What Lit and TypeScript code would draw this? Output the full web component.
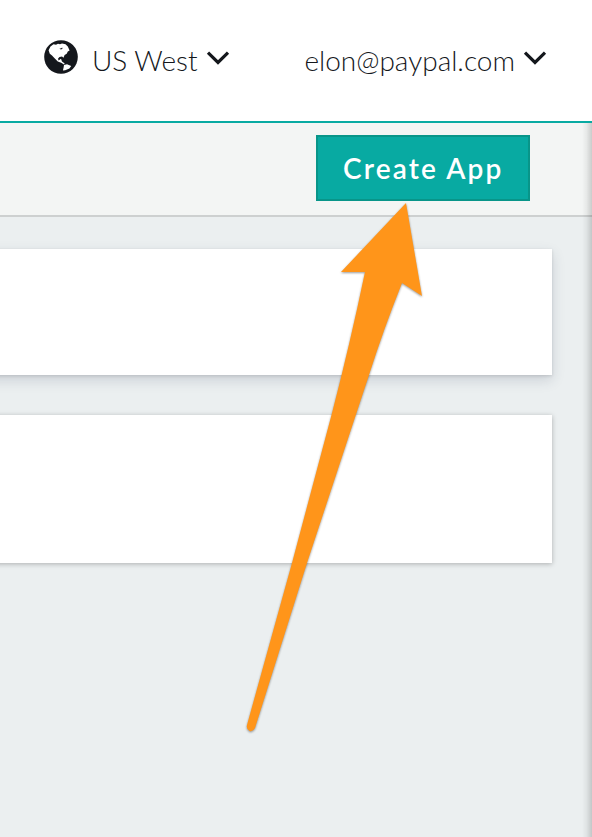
import { LitElement, html, css, svg } from "lit";
import { customElement } from "lit/decorators.js";

const chevron = svg`<path d="M2 2.6 L12 12.4 L22 2.6" fill="none" stroke="#14171c" stroke-width="3.2"/>`;

@customElement("app-root")
export class AppRoot extends LitElement {
  static styles = css`
    :host { display: block; position: relative; width: 592px; height: 837px; overflow: hidden; background: #ebeff0; font-family: Lato, sans-serif; color: #14171c; }
    * { box-sizing: border-box; }
    .header { height: 123px; background: #fff; border-bottom: 2px solid #08aaa2; display: flex; align-items: flex-start; padding: 40px 0 0 44px; }
    .item { display: flex; height: 40px; line-height: 40px; font-size: 28px; font-weight: 300; white-space: nowrap; }
    .region { width: 260.4px; }
    .globe { width: 34px; height: 34px; margin-right: 14px; flex: none; }
    .label { flex: none; }
    .region .label { width: 114px; }
    .account .label { width: 219px; }
    .chevron { width: 24px; height: 16px; margin-top: 10px; flex: none; }
    .toolbar { height: 94px; background: #f3f5f4; border-bottom: 2px solid #cdd0d0; display: flex; justify-content: flex-end; padding: 12px 62px 0 0; }
    .create { width: 214px; height: 66px; margin: 0; padding: 0; background: #08aaa2; border: 2px solid #089589; color: #fff; font: 600 28px/62px Lato, sans-serif; letter-spacing: 2.15px; text-indent: 0.5px; text-align: center; white-space: nowrap; }
    .content { padding-top: 32px; display: flex; flex-direction: column; gap: 40px; }
    .card { width: 572px; height: 126px; margin-left: -20px; background: #fff; box-shadow: 0 1px 3px rgba(0,0,0,.12), 0 5px 12px rgba(50,60,90,.17); }
    .card.tall { height: 148px; box-shadow: 0 1px 5px rgba(0,0,0,.27); }
    .edge { position: absolute; top: 123px; right: 0; bottom: 0; width: 10px; background: linear-gradient(to right, rgba(0,0,0,0), rgba(0,0,0,.05) 45%, rgba(0,0,0,.17)); }
    .arrow { position: absolute; inset: 0; width: 592px; height: 837px; filter: drop-shadow(0 1.5px 1.3px rgba(0,0,0,.4)); pointer-events: none; }
  `;

  render() {
    return html`
      <header class="header">
        <div class="item region">
          <svg class="globe" viewBox="0 0 34 34">
            <circle cx="17" cy="17" r="16.8" fill="#14171c"/>
            <path fill="#fff" d="M4.6 10.2 L6.5 6.4 L9.5 4.2 L12 4.8 L14 3.8 L16 4.2 L18 3.4 L21.5 4.2 L23.8 6.4 L25.6 10.4 L23.8 11.6 L22.7 13.7 L20.6 15 L19.5 17.7 L18 16.6 L15.5 17 L14.1 18.6 L14.5 20.4 L17 18.8 L18 21.4 L20.7 23.4 L20 24.6 L17.2 22.8 L13.8 21.4 L10.8 18.6 L8 15.4 L5.8 13.8 Z"/>
            <path fill="#14171c" d="M15.4 8.8 L17.2 8.3 L18.2 7.4 L18.5 8.8 L17 9.5 Z"/>
            <path fill="#fff" d="M20 24.9 L23 24.3 L27.2 26 L25.4 28.6 L21.2 30.3 L18.9 30.4 L19.6 27.6 Z"/>
          </svg>
          <span class="label">US West</span>
          <svg class="chevron" viewBox="0 0 24 16">${chevron}</svg>
        </div>
        <div class="item account">
          <span class="label">elon@paypal.com</span>
          <svg class="chevron" viewBox="0 0 24 16">${chevron}</svg>
        </div>
      </header>
      <div class="toolbar"><button class="create">Create App</button></div>
      <main class="content">
        <section class="card"></section>
        <section class="card tall"></section>
      </main>
      <div class="edge"></div>
      <svg class="arrow" viewBox="0 0 592 837">
        <path fill="#ff951a" d="M406 203 L422 296 L402 283 Q384 328 369 375 L307 563 L255 728 Q253 732 249.5 731 Q246 729 247 725 L292 563 L331.5 415 Q350 344 365 272 L341 272 Z"/>
      </svg>
    `;
  }
}
